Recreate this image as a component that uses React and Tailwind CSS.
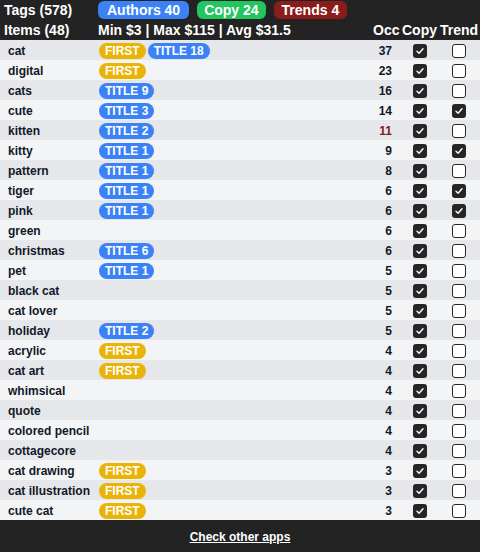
const rows = [
  { name: 'cat', tags: ['FIRST', 'TITLE 18'], occ: 37, trend: false },
  { name: 'digital', tags: ['FIRST'], occ: 23, trend: false },
  { name: 'cats', tags: ['TITLE 9'], occ: 16, trend: false },
  { name: 'cute', tags: ['TITLE 3'], occ: 14, trend: true },
  { name: 'kitten', tags: ['TITLE 2'], occ: 11, trend: false, hot: true },
  { name: 'kitty', tags: ['TITLE 1'], occ: 9, trend: true },
  { name: 'pattern', tags: ['TITLE 1'], occ: 8, trend: false },
  { name: 'tiger', tags: ['TITLE 1'], occ: 6, trend: true },
  { name: 'pink', tags: ['TITLE 1'], occ: 6, trend: true },
  { name: 'green', tags: [], occ: 6, trend: false },
  { name: 'christmas', tags: ['TITLE 6'], occ: 6, trend: false },
  { name: 'pet', tags: ['TITLE 1'], occ: 5, trend: false },
  { name: 'black cat', tags: [], occ: 5, trend: false },
  { name: 'cat lover', tags: [], occ: 5, trend: false },
  { name: 'holiday', tags: ['TITLE 2'], occ: 5, trend: false },
  { name: 'acrylic', tags: ['FIRST'], occ: 4, trend: false },
  { name: 'cat art', tags: ['FIRST'], occ: 4, trend: false },
  { name: 'whimsical', tags: [], occ: 4, trend: false },
  { name: 'quote', tags: [], occ: 4, trend: false },
  { name: 'colored pencil', tags: [], occ: 4, trend: false },
  { name: 'cottagecore', tags: [], occ: 4, trend: false },
  { name: 'cat drawing', tags: ['FIRST'], occ: 3, trend: false },
  { name: 'cat illustration', tags: ['FIRST'], occ: 3, trend: false },
  { name: 'cute cat', tags: ['FIRST'], occ: 3, trend: false },
];

function Box({ checked }) {
  if (checked) {
    return (
      <span className="flex h-[14px] w-[14px] items-center justify-center rounded-[3px] bg-[#262626]">
        <svg width="10" height="10" viewBox="0 0 10 10">
          <path d="M2 5.2 L4.1 7.2 L8 2.8" fill="none" stroke="white" strokeWidth="1.4" strokeLinecap="round" strokeLinejoin="round" />
        </svg>
      </span>
    );
  }
  return <span className="h-[14px] w-[14px] rounded-[3px] border border-[#262626] bg-white" />;
}

function Tag({ label }) {
  const first = label === 'FIRST';
  return (
    <span
      className={
        'flex h-4 items-center rounded-full px-[6px] text-[12px] font-bold leading-none text-white ' +
        (first ? 'bg-[#eab308]' : 'bg-[#3b82f6]')
      }
    >
      {label}
    </span>
  );
}

export default function App() {
  return (
    <div className="flex h-[552px] w-[480px] flex-col bg-[#232323] font-['Liberation_Sans',Arial,sans-serif]">
      {/* header */}
      <div className="flex h-5 items-center text-[14px] font-bold text-white">
        <span className="w-[98px] pl-1">Tags (578)</span>
        <div className="flex gap-2">
          <span className="flex h-[18px] items-center rounded-[6px] bg-[#3b82f6] px-[9px]">Authors 40</span>
          <span className="flex h-[18px] items-center rounded-[6px] bg-[#22c55e] px-[7px]">Copy 24</span>
          <span className="flex h-[18px] items-center rounded-[6px] bg-[#8b1c1c] px-[8px]">Trends 4</span>
        </div>
      </div>
      <div className="flex h-5 items-center text-[14px] font-bold text-white">
        <span className="w-[98px] pl-1">Items (48)</span>
        <span className="flex-1">Min $3 | Max $115 | Avg $31.5</span>
        <span className="w-[29px]">Occ</span>
        <span className="w-[38px]">Copy</span>
        <span className="w-[40px]">Trend</span>
      </div>

      {/* rows */}
      <div className="flex flex-col">
        {rows.map((r, i) => (
          <div
            key={r.name}
            className={
              'flex h-5 items-center pt-[2px] text-[12px] font-bold text-[#111827] ' +
              (i % 2 === 0 ? 'bg-[#e5e7eb]' : 'bg-[#f3f4f6]')
            }
          >
            <span className="w-[99px] pl-2">{r.name}</span>
            <div className="flex flex-1 gap-[2px]">
              {r.tags.map((t) => (
                <Tag key={t} label={t} />
              ))}
            </div>
            <span className={'w-[30px] text-right ' + (r.hot ? 'text-[#7f1d1d]' : '')}>{r.occ}</span>
            <div className="flex w-[40px] justify-center pl-[16px]">
              <Box checked />
            </div>
            <div className="flex w-[48px] justify-center pl-[6px]">
              <Box checked={r.trend} />
            </div>
          </div>
        ))}
      </div>

      {/* footer */}
      <div className="flex flex-1 items-center justify-center pt-[2px]">
        <span className="text-[12px] font-bold text-white underline">Check other apps</span>
      </div>
    </div>
  );
}
